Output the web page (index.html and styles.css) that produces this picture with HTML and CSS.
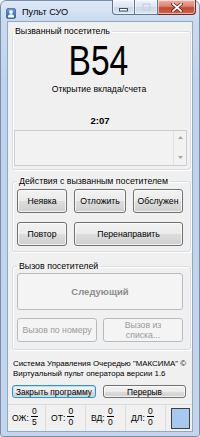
FILE: index.html
```html
<!DOCTYPE html>
<html>
<head>
<meta charset="utf-8">
<link rel="stylesheet" href="styles.css">
</head>
<body>
<div class="window">
  <div class="titlebar">
    <svg class="app-icon" width="10" height="11" viewBox="0 0 10 11">
      <defs>
        <linearGradient id="ig" x1="0" y1="0" x2="0" y2="1">
          <stop offset="0" stop-color="#6d9fd8"/>
          <stop offset="1" stop-color="#2a5a9c"/>
        </linearGradient>
      </defs>
      <rect x="0.5" y="0.5" width="9" height="10" rx="1.5" fill="url(#ig)" stroke="#234f8a" stroke-width="0.6"/>
      <circle cx="5" cy="4" r="1.9" fill="#fff"/>
      <path d="M1.8 9.6 Q1.8 6.3 5 6.3 Q8.2 6.3 8.2 9.6 Z" fill="#fff"/>
    </svg>
    <span class="title">Пульт СУО</span>
    <div class="caption">
      <div class="cbtn cmin">
        <svg width="10" height="4" viewBox="0 0 10 4"><rect x="0.5" y="0.5" width="8" height="2.5" fill="#fff" stroke="#3b4d63" stroke-width="1"/></svg>
      </div>
      <div class="cbtn cmax">
        <svg width="9" height="8" viewBox="0 0 9 8"><rect x="1" y="1" width="7" height="6" fill="none" stroke="#c9d3df" stroke-width="1.4"/></svg>
      </div>
      <div class="cbtn cclose">
        <svg width="12" height="9" viewBox="0 0 12 9"><path d="M2 1 L10 8 M10 1 L2 8" stroke="#5a1e14" stroke-width="3.2" stroke-linecap="square"/><path d="M2 1 L10 8 M10 1 L2 8" stroke="#fff" stroke-width="1.8" stroke-linecap="square"/></svg>
      </div>
    </div>
  </div>
  <div class="client">
    <fieldset class="group g-called">
      <legend>Вызванный посетитель</legend>
      <div class="ticket"><span>B54</span></div>
      <div class="service">Открытие вклада/счета</div>
      <div class="timer">2:07</div>
      <div class="memo">
        <div class="memo-text"></div>
        <div class="vscroll">
          <svg width="5" height="3" viewBox="0 0 5 3"><polygon points="0,3 2.5,0 5,3" fill="#a6a6a6"/></svg>
          <svg width="5" height="3" viewBox="0 0 5 3"><polygon points="0,0 2.5,3 5,0" fill="#a6a6a6"/></svg>
        </div>
      </div>
    </fieldset>
    <fieldset class="group g-actions">
      <legend>Действия с вызванным посетителем</legend>
      <div class="act-grid">
        <button class="btn">Неявка</button>
        <button class="btn">Отложить</button>
        <button class="btn">Обслужен</button>
        <button class="btn">Повтор</button>
        <button class="btn span2">Перенаправить</button>
      </div>
    </fieldset>
    <fieldset class="group g-call">
      <legend>Вызов посетителей</legend>
      <button class="btn dis next">Следующий</button>
      <div class="call-row">
        <button class="btn dis">Вызов по номеру</button>
        <button class="btn dis two">Вызов из<br>списка...</button>
      </div>
    </fieldset>
    <div class="about">Система Управления Очередью "МАКСИМА" ©<br>Виртуальный пульт оператора версии 1.6</div>
    <div class="bottom-btns">
      <button class="btn small focus">Закрыть программу</button>
      <button class="btn small">Перерыв</button>
    </div>
    <div class="statusbar">
      <div class="panel first"><span class="lbl">ОЖ:</span><span class="frac"><span>0</span><i class="bar"></i><span>5</span></span></div>
      <div class="panel"><span class="lbl">ОТ:</span><span class="frac"><span>0</span><i class="bar"></i><span>0</span></span></div>
      <div class="panel"><span class="lbl">ВД:</span><span class="frac"><span>0</span><i class="bar"></i><span>0</span></span></div>
      <div class="panel"><span class="lbl">ДЛ:</span><span class="frac"><span>0</span><i class="bar"></i><span>0</span></span></div>
      <div class="swatch"></div>
    </div>
  </div>
</div>
</body>
</html>
```
FILE: styles.css
```css
* { box-sizing: border-box; }
html, body { margin: 0; padding: 0; }
body {
  width: 200px;
  height: 437px;
  overflow: hidden;
  background: #ffffff;
  font-family: "Liberation Sans", Arial, sans-serif;
  font-size: 8.7px;
  color: #000;
}
.window {
  width: 200px;
  height: 437px;
  display: flex;
  flex-direction: column;
  padding: 0 6px 4px 6px;
  border: 1px solid #7990ad;
  border-radius: 6px 6px 3px 3px;
  background: linear-gradient(#dfe9f6 0px, #cadbf0 20px, #bed3eb 80px, #c3d6ed 100%);
}
.titlebar {
  height: 20px;
  margin: 0 -6px;
  padding-left: 5px;
  display: flex;
  align-items: flex-start;
}
.app-icon { margin-top: 7px; flex: none; }
.title {
  margin-left: 6px;
  margin-top: 6px;
  font-size: 9.2px;
  line-height: 11px;
  color: #000;
}
.caption {
  margin-left: auto;
  margin-right: 3px;
  margin-top: -1px;
  display: flex;
  height: 15px;
}
.cbtn {
  height: 15px;
  border: 1px solid #5f7490;
  border-top: none;
  display: flex;
  align-items: center;
  justify-content: center;
  background: linear-gradient(#eef3fa 0%, #dbe5f2 50%, #c9d7e9 50%, #dbe6f3 100%);
  box-shadow: inset 0 0 0 1px rgba(255,255,255,0.55);
}
.cmin { width: 23px; border-radius: 0 0 0 4px; }
.cmin svg { margin-top: 5px; }
.cmax { width: 23px; border-left: none; }
.cclose {
  width: 38px;
  border-left: none;
  border-color: #6b2a20;
  border-radius: 0 0 4px 0;
  background: linear-gradient(#eab3a6 0%, #d98472 45%, #c54a33 55%, #d0634a 100%);
}
.client {
  flex: 1;
  display: flex;
  flex-direction: column;
  background: #f0f0f0;
  border: 1px solid #92a7c1;
}
.group {
  margin: 4px 1px 0 4px;
  padding: 0 0 3px 0;
  border: 1px solid #d5dfe5;
  border-radius: 3px;
  box-shadow: inset 1px 1px 0 #fff, 1px 1px 0 #fff;
  min-width: 0;
}
.group legend {
  padding: 0 2px;
  margin-left: 0;
  font-size: 8.8px;
  line-height: 10px;
  color: #000;
}
.ticket {
  margin-top: 5px;
  height: 40px;
  line-height: 40px;
  text-align: center;
  padding-right: 7px;
  font-size: 42px;
}
.ticket span {
  display: inline-block;
  transform: scaleX(0.8);
}
.service {
  margin-top: 3px;
  line-height: 11px;
  text-align: center;
  padding-right: 5px;
}
.timer {
  margin-top: 20px;
  line-height: 12px;
  font-size: 9.5px;
  font-weight: bold;
  text-align: center;
  padding-right: 3px;
}
.memo {
  margin: 3px 3px 0 1px;
  height: 36px;
  border: 1px solid #cdcdcd;
  background: #f2f2f2;
  display: flex;
}
.memo-text { flex: 1; }
.vscroll {
  width: 13px;
  border-left: 1px solid #e2e2e2;
  display: flex;
  flex-direction: column;
  justify-content: space-between;
  align-items: center;
  padding: 5px 0 6px;
}
.vscroll svg { display: block; }
.g-actions { margin-top: 6px; padding: 3px 0 5px 4px; }
.act-grid {
  display: grid;
  grid-template-columns: 50px 52px 50px;
  column-gap: 7px;
  row-gap: 9px;
}
.btn {
  font-family: inherit;
  font-size: 8.7px;
  color: #000;
  height: 24px;
  padding: 0;
  border: 1px solid #707070;
  border-radius: 3px;
  background: linear-gradient(#f2f2f2 0%, #ebebeb 50%, #dddddd 50%, #cfcfcf 100%);
  box-shadow: inset 0 0 0 1px rgba(255,255,255,0.75);
  line-height: 10px;
}
.span2 { grid-column: span 2; }
.btn.dis {
  border-color: #b7babc;
  background: #f4f4f4;
  color: #9a9a9a;
  box-shadow: none;
}
.g-call { margin-top: 9px; padding: 2px 7px 7px 4px; }
.next {
  display: block;
  width: 100%;
  height: 37px;
  font-size: 9.5px;
  font-weight: bold;
  color: #8c8c8c !important;
}
.call-row {
  margin-top: 8px;
  display: grid;
  grid-template-columns: 80px 80px;
  column-gap: 6px;
}
.about {
  margin-top: 9px;
  padding-left: 5px;
  font-size: 7.9px;
  line-height: 9.5px;
  white-space: nowrap;
}
.bottom-btns {
  margin-top: 7px;
  padding-left: 4px;
  display: flex;
  gap: 7px;
}
.btn.small { height: 13px; font-size: 8.3px; line-height: 10px; }
.bottom-btns .btn:first-child { width: 84px; }
.bottom-btns .btn:last-child { width: 83px; }
.btn.focus {
  border-color: #3c8fcf;
  box-shadow: inset 0 0 0 1px #b6e2f8;
}
.statusbar {
  margin-top: auto;
  height: 27px;
  border-top: 1px solid #d9d9d9;
  display: flex;
  align-items: center;
}
.panel {
  width: 40px;
  height: 100%;
  padding-left: 5px;
  border-right: 1px solid #dcdcdc;
  display: flex;
  align-items: center;
  font-size: 8.6px;
}
.panel.first { width: 38px; padding-left: 4px; }
.lbl { margin-right: 2px; }
.frac {
  display: flex;
  flex-direction: column;
  align-items: center;
  line-height: 8px;
  font-size: 8.5px;
  margin-bottom: 4px;
}
.frac .bar {
  display: block;
  width: 7px;
  height: 1px;
  margin: 1px 0;
  background: #000;
}
.swatch {
  margin-left: 5px;
  width: 19px;
  height: 21px;
  background: #a7c9f0;
  border: 1px solid #3f3f3f;
}
```
